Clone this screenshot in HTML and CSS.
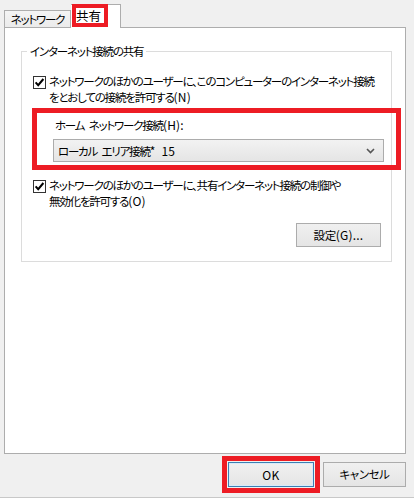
FILE: index.html
```html
<!DOCTYPE html>
<html lang="ja">
<head>
<meta charset="utf-8">
<link rel="stylesheet" href="styles.css">
</head>
<body>
<div class="dialog">
  <div class="tabs">
    <div class="tab">ネットワーク</div>
    <div class="tab active"><span class="hl-tab">共有</span></div>
  </div>
  <div class="panel">
    <div class="group">
      <div class="legend">インターネット接続の共有</div>
      <div class="check first">
        <span class="box"><svg width="11" height="11" viewBox="0 0 11 11"><path d="M1.6 5.4 L4.2 8.2 L9.4 2" fill="none" stroke="#000" stroke-width="2"/></svg></span>
        <span class="check-text">ネットワークのほかのユーザーに、このコンピューターのインターネット接続<br>をとおしての接続を許可する<span class="lat">(N)</span></span>
      </div>
      <div class="hl-box">
        <div class="field-label">ホーム ネットワーク接続<span class="lat">(H):</span></div>
        <div class="select">
          <span>ローカル エリア接続<span class="lat">* 15</span></span>
          <svg class="chev" width="9" height="6" viewBox="0 0 9 6"><path d="M1 1 L4.5 4.5 L8 1" fill="none" stroke="#555" stroke-width="1.6"/></svg>
        </div>
      </div>
      <div class="check second">
        <span class="box"><svg width="11" height="11" viewBox="0 0 11 11"><path d="M1.6 5.4 L4.2 8.2 L9.4 2" fill="none" stroke="#000" stroke-width="2"/></svg></span>
        <span class="check-text">ネットワークのほかのユーザーに、共有インターネット接続の制御や<br>無効化を許可する<span class="lat">(O)</span></span>
      </div>
      <div class="settings-row">
        <button class="btn settings">設定<span class="lat">(G)...</span></button>
      </div>
    </div>
  </div>
  <div class="actions">
    <span class="hl-btn"><button class="btn ok">OK</button></span>
    <button class="btn cancel">キャンセル</button>
  </div>
  <div class="bottom-line"></div>
</div>
</body>
</html>
```

FILE: styles.css
```css
html, body {
  margin: 0;
  padding: 0;
}
body {
  background: #f0f0f0;
  font-family: "Noto Sans CJK JP", "Noto Sans", sans-serif;
  font-size: 11.5px;
  letter-spacing: -1.2px;
  word-spacing: 3px;
  line-height: 15px;
  color: #000;
  width: 414px;
  height: 498px;
  overflow: hidden;
  font-feature-settings: "palt";
  white-space: nowrap;
}
.lat {
  letter-spacing: 0.2px;
  font-size: 12px;
}
.dialog {
  width: 414px;
  height: 498px;
}
.tabs {
  display: flex;
  align-items: flex-end;
  height: 27px;
  padding: 4px 0 0 4px;
  box-sizing: border-box;
}
.tab {
  height: 16px;
  width: 65px;
  box-sizing: content-box;
  border: 1px solid #adadad;
  border-bottom: none;
  background: linear-gradient(#f4f4f4, #ebebeb);
  text-align: center;
  line-height: 16px;
}
.tab.active {
  width: 48px;
  height: 23px;
  border-left: none;
  background: #fff;
  margin-bottom: -1px;
  position: relative;
  z-index: 1;
  text-align: left;
  padding-left: 1px;
}
.hl-tab {
  display: block;
  width: 28px;
  height: 15px;
  margin-top: -1px;
  border: 4px solid #ed1c24;
  background: #fff;
  line-height: 15px;
  padding-left: 0;
  font-size: 12.5px;
  letter-spacing: 0;
}
.panel {
  margin: 0 8px 0 4px;
  height: 427px;
  box-sizing: border-box;
  border: 1px solid #adadad;
  background: #fff;
  padding: 23px 13px 0 16px;
}
.group {
  border: 1px solid #dcdcdc;
  height: 211px;
  box-sizing: border-box;
}
.legend {
  width: fit-content;
  margin: -8px 0 0 5px;
  padding: 0 3px;
  background: #fff;
}
.check {
  display: flex;
  align-items: flex-start;
  padding-left: 11px;
  gap: 3px;
}
.check.first {
  margin-top: 15px;
}
.check.second {
  margin-top: 8px;
}
.box {
  width: 11px;
  height: 11px;
  border: 1px solid #333;
  background: #fff;
  margin-top: 2px;
  flex: none;
  display: flex;
}
.hl-box {
  margin: 3px -10px 0 10px;
  border: 5px solid #ed1c24;
  padding: 4px 12px 3px 16px;
}
.field-label {
  padding-left: 2px;
}
.select {
  margin-top: 6px;
  height: 23px;
  box-sizing: border-box;
  border: 1px solid #acacac;
  background: linear-gradient(#f2f2f2, #e5e5e5);
  display: flex;
  align-items: center;
  justify-content: space-between;
  padding: 0 8px 0 4px;
}
.chev {
  display: block;
}
.settings-row {
  display: flex;
  justify-content: flex-end;
  margin-top: 14px;
  padding-right: 10px;
}
.btn {
  font-family: inherit;
  font-size: 11.5px;
  letter-spacing: -0.4px;
  line-height: 15px;
  color: #000;
  border: 1px solid #acacac;
  background: linear-gradient(#f0f0f0, #e5e5e5);
  padding: 0;
  margin: 0;
  box-sizing: border-box;
  font-feature-settings: "palt";
}
.settings {
  width: 85px;
  height: 24px;
}
.actions {
  display: flex;
  justify-content: flex-end;
  align-items: center;
  padding: 2px 8px 0 0;
  gap: 3px;
}
.hl-btn {
  display: flex;
  border: 5px solid #ed1c24;
  padding: 1px;
}
.ok {
  width: 86px;
  height: 25px;
  font-size: 12px;
  letter-spacing: 0.3px;
  border-color: #3c7fb1;
  box-shadow: inset 0 0 0 1px #d8ebfa;
}
.cancel {
  width: 83px;
  height: 25px;
}
.bottom-line {
  margin-top: 4px;
  height: 1px;
  background: #c8c8c8;
}
```
